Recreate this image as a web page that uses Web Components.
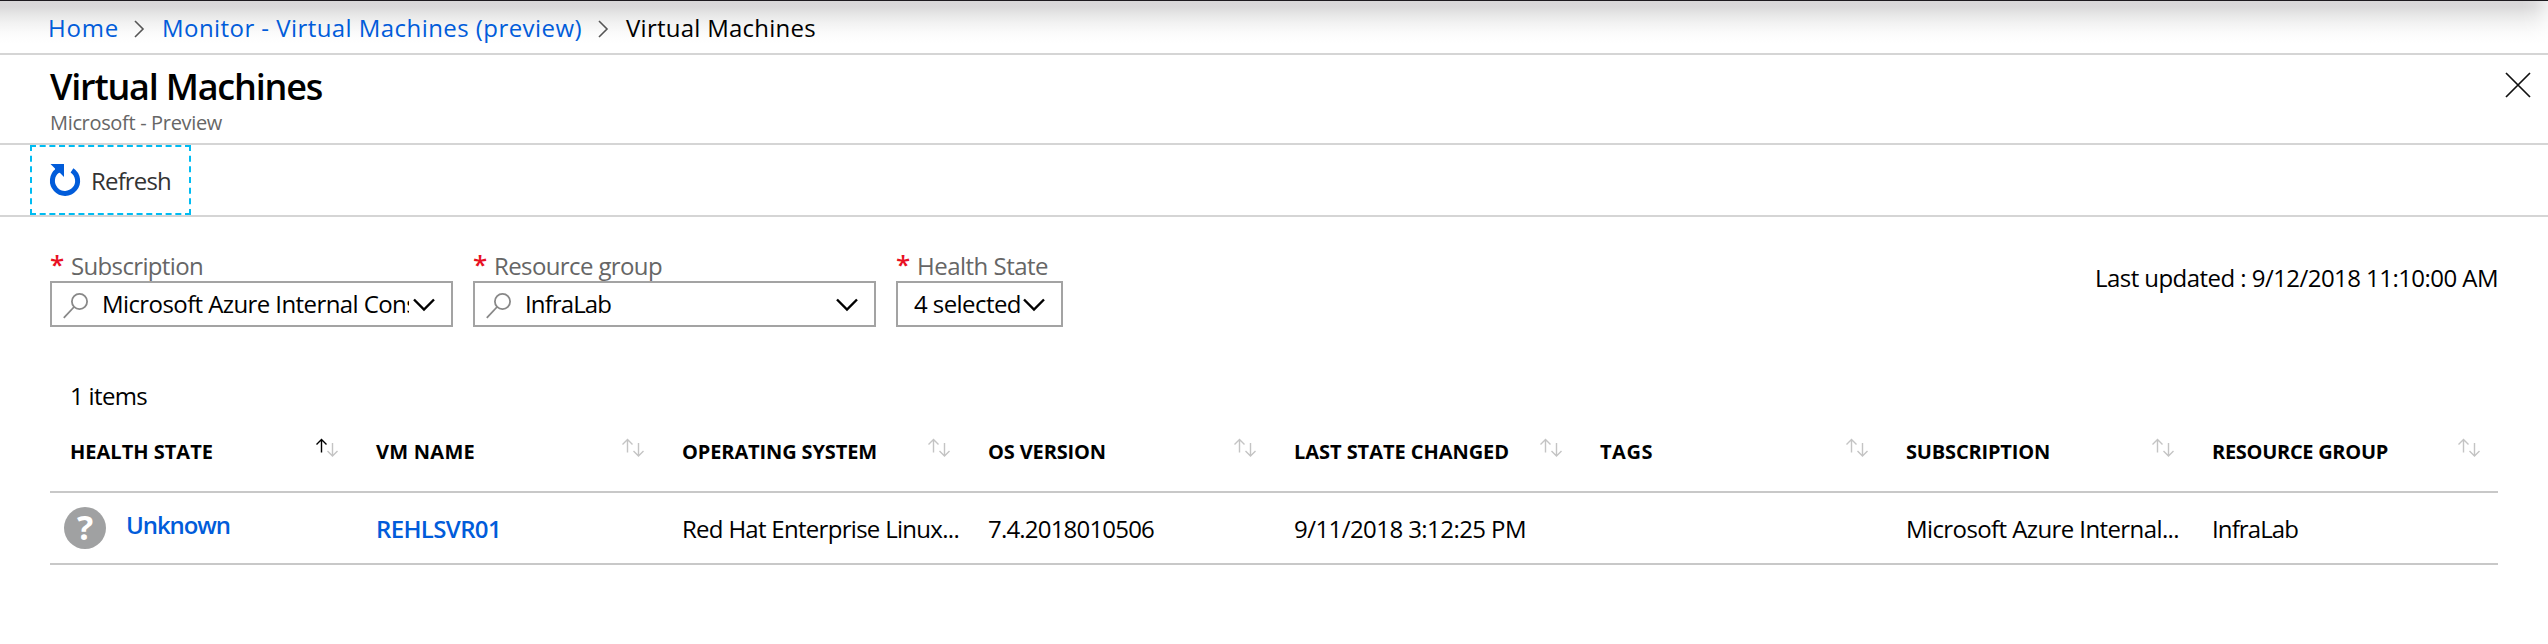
<!DOCTYPE html>
<html lang="en"><head><meta charset="utf-8"><title>Virtual Machines</title>
<style>
body{margin:0;background:#fff;color:#000;font:24px/32px "Open Sans","Noto Sans",sans-serif}
</style></head><body>
<vm-page></vm-page>
<script>
const define=(name,html,setup)=>{
  const t=document.createElement('template');t.innerHTML=html;
  customElements.define(name,class extends HTMLElement{
    connectedCallback(){
      if(this.shadowRoot)return;
      this.attachShadow({mode:'open'}).append(t.content.cloneNode(true));
      if(setup)setup(this,this.shadowRoot);
    }
  });
};

// Text run whose tracking is adjusted to the advance width given in "w".
define('fit-text',`<style>:host{display:block;white-space:pre}span{display:inline-block}</style><span><slot></slot></span>`,(el,root)=>{
  const w=+el.getAttribute('w'),s=root.querySelector('span'),n=el.textContent.length;
  if(w)s.style.letterSpacing=((w-s.getBoundingClientRect().width)/n).toFixed(3)+'px';
});

define('crumb-bar',`<style>
:host{display:block;height:53px;border-bottom:2px solid #d5d5d5;position:relative}
.shade{position:absolute;inset:0 0 auto;height:44px;background:linear-gradient(#d8d6d8 0,#dad9da 7px,#e6e6e6 14px,#f2f2f2 23px,#fbfbfb 33px,#fff 43px);-webkit-mask:linear-gradient(to left,#0006,#000d 14px,#000 26px);mask:linear-gradient(to left,#0006,#000d 14px,#000 26px)}
.top{position:absolute;inset:0 0 auto;height:1px;background:#1d1a1f}
nav{display:flex;position:relative;padding:12px 0 0 48px;color:#015cda}
svg{width:12px;height:18px;margin:8px 16px 0 15px;fill:none;stroke:#555;stroke-width:1.6}
.now{color:#000}
</style><div class="shade"></div><div class="top"></div>
<nav><fit-text w="71">Home</fit-text><svg viewBox="0 0 12 18"><path d="M1 1l8 8-8 8"/></svg>
<fit-text w="420">Monitor - Virtual Machines (preview)</fit-text><svg viewBox="0 0 12 18" style="margin-left:16px"><path d="M1 1l8 8-8 8"/></svg>
<fit-text class="now" w="190">Virtual Machines</fit-text></nav>`);

define('blade-title',`<style>
:host{display:flex;justify-content:space-between;height:88px;border-bottom:2px solid #d5d5d5}
.t{padding:8px 0 0 50px}
.h{font-size:36px;line-height:48px;font-weight:600}
.s{font-size:20px;line-height:26px;color:#666;margin:-1px 0 0 0}
svg{width:26px;height:26px;margin:17px 17px 0 0;fill:none;stroke:#111;stroke-width:1.7}
</style><div class="t"><fit-text class="h" w="272">Virtual Machines</fit-text><fit-text class="s" w="172">Microsoft - Preview</fit-text></div>
<svg viewBox="0 0 26 26"><path d="M1 1l24 24M25 1L1 25"/></svg>`);

define('command-bar',`<style>
:host{display:block;height:70px;padding-left:30px;border-bottom:2px solid #d5d5d5}
.b{box-sizing:border-box;width:161px;height:70px;border:2px dashed #00bcf2;display:flex;color:#333}
svg{width:34px;height:36px;margin:16px 8px 0 17px}
fit-text{margin-top:18px}
</style><div class="b"><svg viewBox="0 0 34 36"><path d="M8.6 7.6A12.6 12.6 0 1 0 23 7.3" fill="none" stroke="#015cda" stroke-width="5"/><path d="M1.5 1H15v13L10.8 9.8 6 11V5.5z" fill="#015cda"/></svg><fit-text w="80">Refresh</fit-text></div>`);

define('drop-field',`<style>
:host{display:block}
.l{display:flex;height:32px;color:#666}
.star{width:21px;color:#e81123;font-size:26px;font-weight:600;line-height:32px;margin-top:-2px}
.box{box-sizing:border-box;height:46px;border:2px solid #a3a3a3;display:flex;margin-top:-1px}
.mag{width:26px;height:28px;margin:9px 13px 0 11px;flex:none;fill:none;stroke:#888;stroke-width:1.8}
:host([plain]) .mag{display:none}
.v{flex:1;min-width:0;overflow:hidden;padding-top:5px}
:host([plain]) .v{padding-left:16px;overflow:visible}
.chev{width:22px;height:14px;flex:none;margin:15px 16px 0 4px;fill:none;stroke:#000;stroke-width:2.4}
</style><div class="l"><span class="star">*</span><slot name="label"></slot></div>
<div class="box"><svg class="mag" viewBox="0 0 26 28"><circle cx="16.5" cy="9.5" r="7.6"/><path d="M11 15L.8 25.8"/></svg>
<div class="v"><slot></slot></div><svg class="chev" viewBox="0 0 22 14"><path d="M1 1.5l10 10 10-10"/></svg></div>`);

define('filter-bar',`<style>
:host{display:flex;padding:33px 50px 0;height:110px}
drop-field{width:403px;margin-right:20px}
drop-field[plain]{width:167px;margin:0}
.upd{margin:12px 0 0 auto}
</style>
<drop-field><fit-text slot="label" w="132">Subscription</fit-text><fit-text w="315">Microsoft Azure Internal Cons</fit-text></drop-field>
<drop-field><fit-text slot="label" w="168">Resource group</fit-text><fit-text w="86">InfraLab</fit-text></drop-field>
<drop-field plain><fit-text slot="label" w="131">Health State</fit-text><fit-text w="107">4 selected</fit-text></drop-field>
<fit-text class="upd" w="403">Last updated : 9/12/2018 11:10:00 AM</fit-text>`);

define('sort-head',`<style>
:host{display:flex;justify-content:space-between;box-sizing:border-box;width:306px;padding:26px 17px 0 20px;font-weight:700;font-size:20px;line-height:28px}
svg{width:24px;height:20px;fill:none;stroke:#c4c4c4;stroke-width:1.4}
:host([asc]) .u{stroke:#000}
</style><slot></slot><svg viewBox="0 0 24 20"><path class="u" d="M6.5 14.5V2M1.5 6.5l5-5 5 5"/><path d="M17.5 5v12.5M12.5 13l5 5 5-5"/></svg>`);

define('vm-table',`<style>
:host{display:block;margin:0 50px}
.n{padding:20px 0 0 20px;height:32px}
.h{display:flex;height:79px;border-bottom:2px solid #c8c8c8}
.r{display:flex;height:70px;border-bottom:2px solid #c8c8c8}
.c{box-sizing:border-box;width:306px;padding:20px 0 0 20px}
.k{color:#015cda;font-weight:600}
.s{display:flex;padding:14px 0 0 14px}
.q{width:42px;height:42px;border-radius:50%;background:#a0a1a2;color:#fff;font-weight:700;font-size:34px;line-height:41px;text-align:center;margin-right:20px}
.s fit-text{margin-top:2px}
</style>
<fit-text class="n" w="77">1 items</fit-text>
<div class="h">
<sort-head asc><fit-text w="143">HEALTH STATE</fit-text></sort-head>
<sort-head><fit-text w="99">VM NAME</fit-text></sort-head>
<sort-head><fit-text w="195">OPERATING SYSTEM</fit-text></sort-head>
<sort-head><fit-text w="118">OS VERSION</fit-text></sort-head>
<sort-head><fit-text w="215">LAST STATE CHANGED</fit-text></sort-head>
<sort-head><fit-text w="53">TAGS</fit-text></sort-head>
<sort-head><fit-text w="144">SUBSCRIPTION</fit-text></sort-head>
<sort-head><fit-text w="176">RESOURCE GROUP</fit-text></sort-head>
</div>
<div class="r">
<div class="c k s"><span class="q">?</span><fit-text w="104">Unknown</fit-text></div>
<div class="c k"><fit-text w="125">REHLSVR01</fit-text></div>
<div class="c"><fit-text w="277">Red Hat Enterprise Linux...</fit-text></div>
<div class="c"><fit-text w="166">7.4.2018010506</fit-text></div>
<div class="c"><fit-text w="232">9/11/2018 3:12:25 PM</fit-text></div>
<div class="c"></div>
<div class="c"><fit-text w="273">Microsoft Azure Internal...</fit-text></div>
<div class="c"><fit-text w="86">InfraLab</fit-text></div>
</div>`);

define('vm-page',`<style>:host{display:block;height:644px;overflow:hidden}</style>
<crumb-bar></crumb-bar><blade-title></blade-title><command-bar></command-bar><filter-bar></filter-bar><vm-table></vm-table>`);
</script></body></html>
